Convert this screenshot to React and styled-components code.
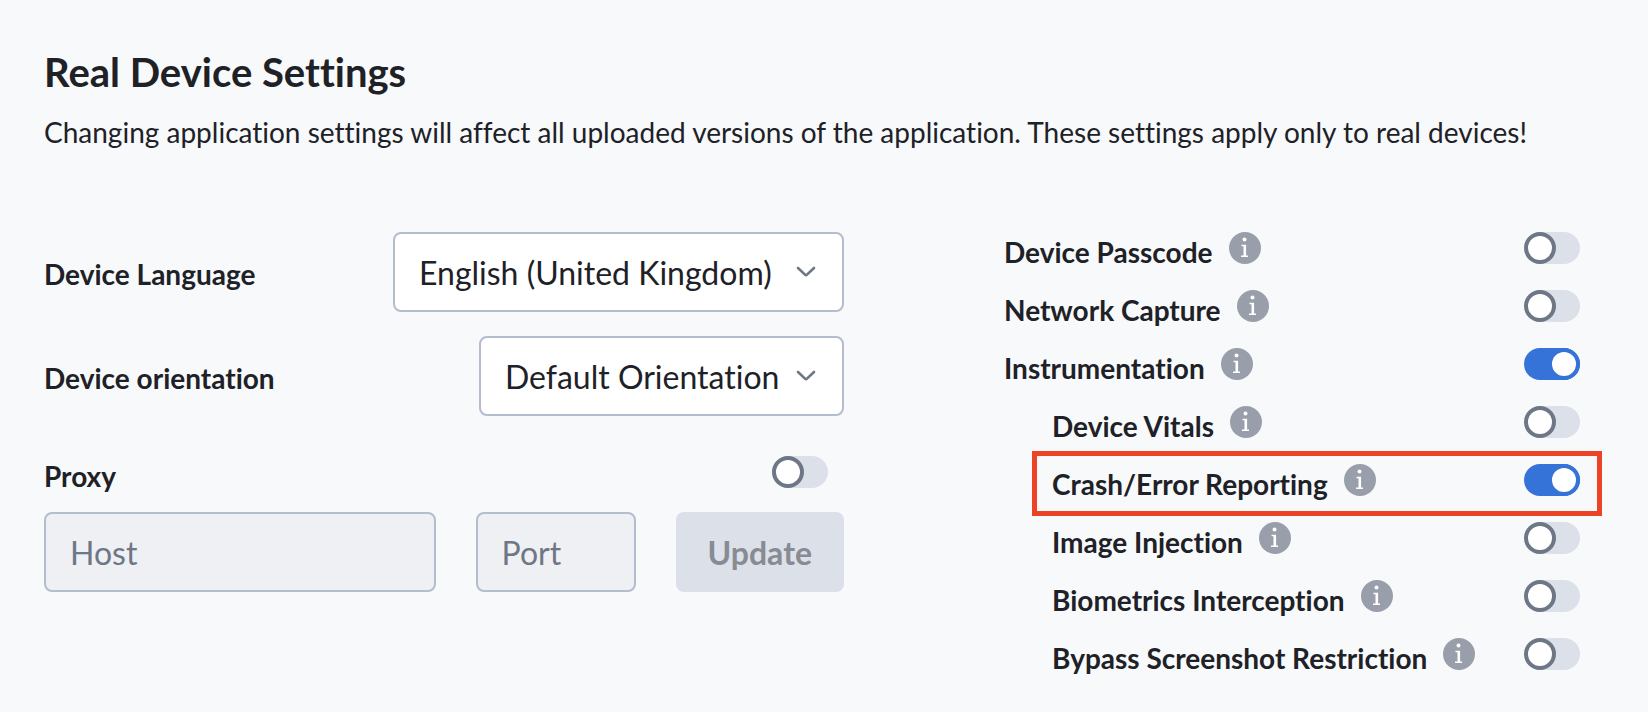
import React, { useState } from "react";
import styled, { createGlobalStyle } from "styled-components";

const GlobalStyle = createGlobalStyle`
  *, *::before, *::after { box-sizing: border-box; }
  body {
    margin: 0;
    background: #f7f9fb;
    color: #202127;
    font-family: Lato, "Liberation Sans", sans-serif;
    font-variant-ligatures: none;
  }
`;

const Page = styled.main`
  padding: 48px 68px 24px 44px;
`;

const Title = styled.h1`
  margin: 0;
  font-size: 40px;
  line-height: 48px;
  font-weight: 700;
`;

const Intro = styled.p`
  margin: 16px 0 0;
  font-size: 28px;
  line-height: 40px;
`;

const Columns = styled.div`
  display: grid;
  grid-template-columns: minmax(0, 25fr) minmax(0, 18fr);
  column-gap: 160px;
  margin-top: 80px;
`;

const GeneralSettings = styled.section`
  display: flex;
  flex-direction: column;
  gap: 24px;
`;

const Label = styled.label`
  font-size: 28px;
  line-height: 40px;
  font-weight: 700;
  white-space: nowrap;
`;

const SelectRow = styled.div`
  display: flex;
  align-items: baseline;
  justify-content: space-between;
`;

const SelectBox = styled.div`
  position: relative;
`;

const Select = styled.select`
  appearance: none;
  display: block;
  width: ${(p) => p.$width}px;
  height: 80px;
  padding: 0 64px 0 24px;
  border: 2px solid #b4bdcd;
  border-radius: 8px;
  background: #fff;
  color: inherit;
  font: inherit;
  font-size: 32px;
`;

const Chevron = styled.svg`
  position: absolute;
  top: 32px;
  right: 26px;
  width: 24px;
  height: 16px;
  fill: none;
  stroke: #6d7786;
  stroke-width: 2.6;
  stroke-linecap: round;
  stroke-linejoin: round;
  pointer-events: none;
`;

const ProxyRow = styled.div`
  display: flex;
  align-items: flex-start;
  justify-content: space-between;
  height: 32px;
  margin-top: 16px;
  padding-right: 16px;
`;

const ProxyForm = styled.form`
  display: grid;
  grid-template-columns: minmax(0, 1fr) 160px auto;
  gap: 40px;
`;

const TextInput = styled.input`
  width: 100%;
  height: 80px;
  padding: 0 24px;
  border: 2px solid #b4bdcd;
  border-radius: 8px;
  background: #eff0f4;
  color: inherit;
  font: inherit;
  font-size: 32px;

  &::placeholder {
    color: #6d7786;
    opacity: 1;
  }
`;

const UpdateButton = styled.button`
  height: 80px;
  padding: 0 32px;
  border: 0;
  border-radius: 8px;
  background: #dce0e9;
  color: #888b93;
  font: inherit;
  font-size: 32px;
  font-weight: 700;
`;

const Features = styled.ul`
  margin: 0;
  padding: 0;
  list-style: none;
`;

const Feature = styled.li`
  position: relative;
  display: flex;
  align-items: flex-start;
  height: 58px;
  padding-left: ${(p) => (p.$nested ? "48px" : "0")};
`;

const Highlight = styled.span`
  position: absolute;
  inset: -13px -22px 6px 28px;
  border: 5px solid #ec4226;
  pointer-events: none;
`;

const InfoSvg = styled.svg`
  flex: none;
  width: 32px;
  height: 32px;
  margin-left: 16px;
`;

const Toggle = styled.input`
  appearance: none;
  flex: none;
  width: 56px;
  height: 32px;
  margin: 0 0 0 auto;
  border-radius: 16px;
  background: #dce0e9;

  &::before {
    content: "";
    display: block;
    width: 32px;
    height: 32px;
    border: 4px solid #6d7786;
    border-radius: 50%;
    background: #fff;
  }

  &:checked {
    background: #3573d9;
  }

  &:checked::before {
    margin-left: 24px;
    border-color: #3573d9;
  }
`;

const features = [
  { id: "passcode", name: "Device Passcode" },
  { id: "network", name: "Network Capture" },
  { id: "instrumentation", name: "Instrumentation", on: true },
  { id: "vitals", name: "Device Vitals", nested: true },
  { id: "crash", name: "Crash/Error Reporting", nested: true, on: true, highlighted: true },
  { id: "image", name: "Image Injection", nested: true },
  { id: "biometrics", name: "Biometrics Interception", nested: true },
  { id: "screenshot", name: "Bypass Screenshot Restriction", nested: true },
];

function InfoIcon({ topic }) {
  return (
    <InfoSvg viewBox="0 0 32 32" role="img" aria-label={`About ${topic}`}>
      <circle cx="16" cy="16" r="16" fill="#999eab" />
      <circle cx="15.5" cy="7.5" r="2" fill="#fff" />
      <path d="M12.5 12.7h4.6v10.9H19v1.5h-7v-1.5h2.5v-9.4h-2z" fill="#fff" />
    </InfoSvg>
  );
}

function SelectField({ id, label, option, width }) {
  return (
    <SelectRow>
      <Label htmlFor={id}>{label}</Label>
      <SelectBox>
        <Select id={id} $width={width}>
          <option>{option}</option>
        </Select>
        <Chevron viewBox="0 0 24 16" aria-hidden="true">
          <path d="M4 4l7 6.6q1 .9 2 0L20 4" />
        </Chevron>
      </SelectBox>
    </SelectRow>
  );
}

function FeatureRow({ id, name, nested, on, highlighted }) {
  const [checked, setChecked] = useState(Boolean(on));
  return (
    <Feature $nested={nested}>
      <Label htmlFor={id}>{name}</Label>
      <InfoIcon topic={name} />
      <Toggle
        id={id}
        type="checkbox"
        role="switch"
        checked={checked}
        onChange={(e) => setChecked(e.target.checked)}
      />
      {highlighted && <Highlight />}
    </Feature>
  );
}

export default function App() {
  const [proxy, setProxy] = useState(false);
  return (
    <>
      <GlobalStyle />
      <Page>
        <Title>Real Device Settings</Title>
        <Intro>
          Changing application settings will affect all uploaded versions of the application. These
          settings apply only to real devices!
        </Intro>
        <Columns>
          <GeneralSettings>
            <SelectField
              id="language"
              label="Device Language"
              option="English (United Kingdom)"
              width={451}
            />
            <SelectField
              id="orientation"
              label="Device orientation"
              option="Default Orientation"
              width={365}
            />
            <ProxyRow>
              <Label htmlFor="proxy">Proxy</Label>
              <Toggle
                id="proxy"
                type="checkbox"
                role="switch"
                checked={proxy}
                onChange={(e) => setProxy(e.target.checked)}
              />
            </ProxyRow>
            <ProxyForm onSubmit={(e) => e.preventDefault()}>
              <TextInput aria-label="Host" placeholder="Host" disabled={!proxy} />
              <TextInput aria-label="Port" placeholder="Port" disabled={!proxy} />
              <UpdateButton type="submit" disabled={!proxy}>
                Update
              </UpdateButton>
            </ProxyForm>
          </GeneralSettings>
          <Features>
            {features.map((feature) => (
              <FeatureRow key={feature.id} {...feature} />
            ))}
          </Features>
        </Columns>
      </Page>
    </>
  );
}
